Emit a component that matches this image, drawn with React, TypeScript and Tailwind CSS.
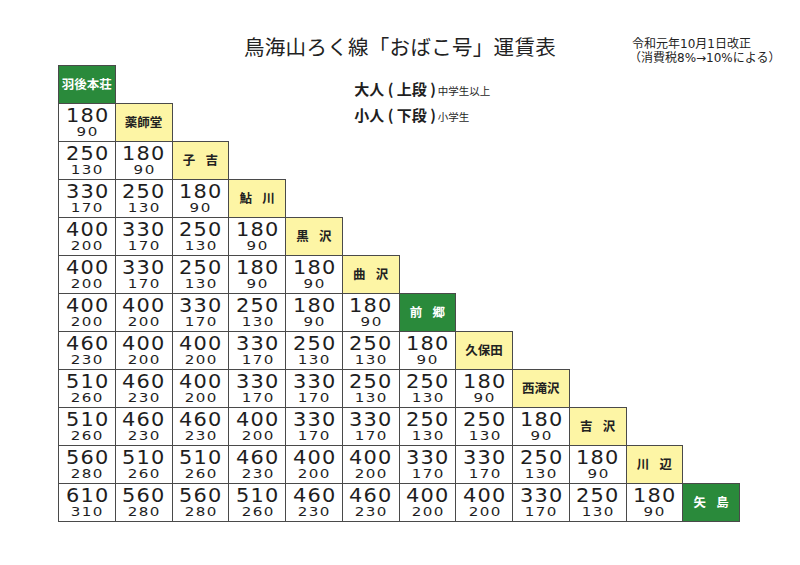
import React from "react";

type Cell = [number, number];

const rows: Cell[][] = [
  [],
  [[180, 90]],
  [[250, 130], [180, 90]],
  [[330, 170], [250, 130], [180, 90]],
  [[400, 200], [330, 170], [250, 130], [180, 90]],
  [[400, 200], [330, 170], [250, 130], [180, 90], [180, 90]],
  [[400, 200], [400, 200], [330, 170], [250, 130], [180, 90], [180, 90]],
  [[460, 230], [400, 200], [400, 200], [330, 170], [250, 130], [250, 130], [180, 90]],
  [[510, 260], [460, 230], [400, 200], [330, 170], [330, 170], [250, 130], [250, 130], [180, 90]],
  [[510, 260], [460, 230], [460, 230], [400, 200], [330, 170], [330, 170], [250, 130], [250, 130], [180, 90]],
  [[560, 280], [510, 260], [510, 260], [460, 230], [400, 200], [400, 200], [330, 170], [330, 170], [250, 130], [180, 90]],
  [[610, 310], [560, 280], [560, 280], [510, 260], [460, 230], [460, 230], [400, 200], [400, 200], [330, 170], [250, 130], [180, 90]],
];

const stations: { name: string[]; green: boolean }[] = [
  { name: ["羽後本荘"], green: true },
  { name: ["薬師堂"], green: false },
  { name: ["子", "吉"], green: false },
  { name: ["鮎", "川"], green: false },
  { name: ["黒", "沢"], green: false },
  { name: ["曲", "沢"], green: false },
  { name: ["前", "郷"], green: true },
  { name: ["久保田"], green: false },
  { name: ["西滝沢"], green: false },
  { name: ["吉", "沢"], green: false },
  { name: ["川", "辺"], green: false },
  { name: ["矢", "島"], green: true },
];

const jp = { fontFamily: '"Noto Sans CJK JP", "Noto Sans", sans-serif' };
const mixed = { fontFamily: '"DejaVu Sans", "Noto Sans CJK JP", sans-serif' };
const num = { fontFamily: '"DejaVu Sans", "Liberation Sans", sans-serif' };

function StationCell({ s }: { s: { name: string[]; green: boolean } }) {
  return (
    <td
      className={
        "border border-[#4a4a4a] p-0 text-center align-middle " +
        (s.green ? "bg-[#2a8a3b] text-white" : "bg-[#fdf5a5] text-[#222]")
      }
      style={jp}
    >
      <div className="flex items-center justify-center gap-[10px] text-[12.5px] font-bold leading-none">
        {s.name.map((n, i) => (
          <span key={i}>{n}</span>
        ))}
      </div>
    </td>
  );
}

function NumCell({ c }: { c: Cell }) {
  return (
    <td className="border border-[#4a4a4a] bg-white p-0 text-center align-middle text-[#1e1e1e]" style={num}>
      <div className="flex flex-col items-center h-[33px]">
        <span className="inline-block scale-x-[1.1] text-[19px] leading-[19px] tracking-[1px] pl-[1px]">{c[0]}</span>
        <span className="inline-block scale-x-[1.18] text-[12.8px] leading-[14px] tracking-[1.2px] pl-[1.2px]">{c[1]}</span>
      </div>
    </td>
  );
}

export default function App() {
  return (
    <div className="w-[800px] h-[565px] bg-white overflow-hidden pt-[31px]">
      <div className="grid grid-cols-[1fr_auto_1fr] items-start h-[30px]">
        <div />
        <div className="text-[20.5px] leading-[30px] text-[#222] tracking-[0.3px]" style={jp}>
          鳥海山ろく線「おばこ号」運賃表
        </div>
        <div className="pl-[76px] mt-[6px] text-[12px] leading-[14px] text-[#222] whitespace-nowrap" style={mixed}>
          <div>令和元年10月1日改正</div>
          <div className="-ml-[3px]">（消費税8%→10%による）</div>
        </div>
      </div>
      <div className="ml-[58px] mt-[4px]">
        <table className="table-fixed border-collapse w-[682px]">
          <tbody>
            {rows.map((r, i) => {
              const trailing = 11 - i;
              return (
                <tr key={i} className="h-[38px]">
                  {r.map((c, j) => (
                    <NumCell key={j} c={c} />
                  ))}
                  <StationCell s={stations[i]} />
                  {i === 0 &&
                    [0, 1, 2, 3].map((k) => <td key={"e" + k} className="p-0" />)}
                  {i === 0 && (
                    <td colSpan={7} rowSpan={2} className="p-0 pl-[12px] pb-[4px] align-middle" style={jp}>
                      <div className="flex flex-col gap-[8px] text-[#1e1e1e]">
                        <div className="flex items-baseline">
                          <span className="text-[15px] font-bold leading-[18px]">大人 ( 上段 )</span>
                          <span className="ml-[2px] text-[10.5px] leading-[12px]">中学生以上</span>
                        </div>
                        <div className="flex items-baseline">
                          <span className="text-[15px] font-bold leading-[18px]">小人 ( 下段 )</span>
                          <span className="ml-[2px] text-[10.5px] leading-[12px]">小学生</span>
                        </div>
                      </div>
                    </td>
                  )}
                  {i === 1 &&
                    [0, 1, 2].map((k) => <td key={"e" + k} className="p-0" />)}
                  {i >= 2 &&
                    Array.from({ length: trailing }).map((_, k) => (
                      <td key={"e" + k} className="p-0" />
                    ))}
                </tr>
              );
            })}
          </tbody>
        </table>
      </div>
    </div>
  );
}
